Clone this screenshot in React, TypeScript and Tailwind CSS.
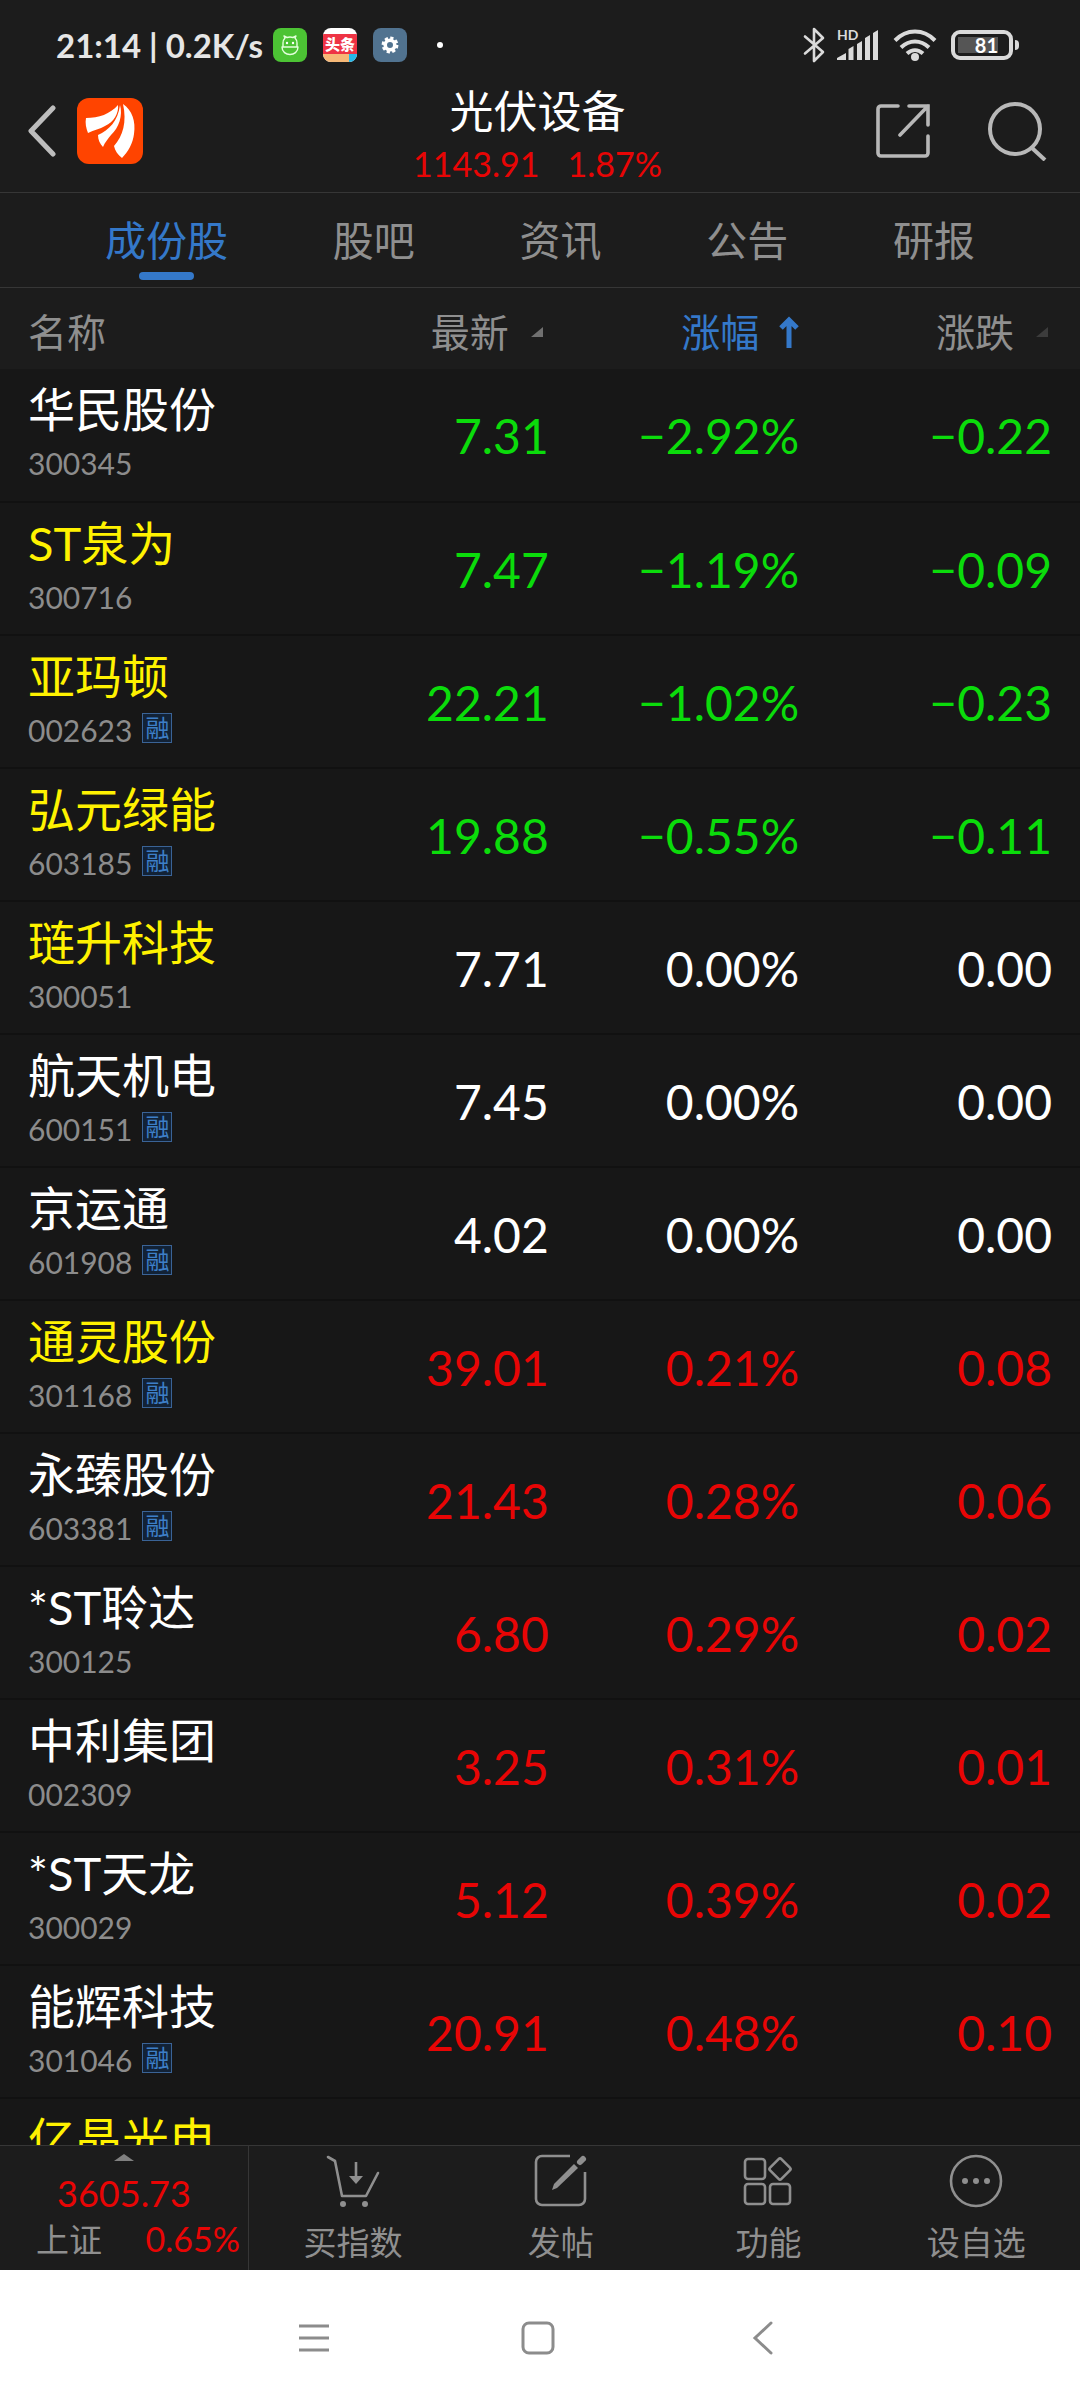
import React, { useState } from "react";
import clsx from "clsx";

type Stock = {
  name: string;
  code: string;
  price: string;
  percent: string;
  change: string;
  starred?: boolean;
  margin?: boolean;
};

const stocks: Stock[] = [
  { name: "华民股份", code: "300345", price: "7.31", percent: "−2.92%", change: "−0.22" },
  { name: "ST泉为", code: "300716", price: "7.47", percent: "−1.19%", change: "−0.09", starred: true },
  { name: "亚玛顿", code: "002623", price: "22.21", percent: "−1.02%", change: "−0.23", starred: true, margin: true },
  { name: "弘元绿能", code: "603185", price: "19.88", percent: "−0.55%", change: "−0.11", starred: true, margin: true },
  { name: "琏升科技", code: "300051", price: "7.71", percent: "0.00%", change: "0.00", starred: true },
  { name: "航天机电", code: "600151", price: "7.45", percent: "0.00%", change: "0.00", margin: true },
  { name: "京运通", code: "601908", price: "4.02", percent: "0.00%", change: "0.00", margin: true },
  { name: "通灵股份", code: "301168", price: "39.01", percent: "0.21%", change: "0.08", starred: true, margin: true },
  { name: "永臻股份", code: "603381", price: "21.43", percent: "0.28%", change: "0.06", margin: true },
  { name: "*ST聆达", code: "300125", price: "6.80", percent: "0.29%", change: "0.02" },
  { name: "中利集团", code: "002309", price: "3.25", percent: "0.31%", change: "0.01" },
  { name: "*ST天龙", code: "300029", price: "5.12", percent: "0.39%", change: "0.02" },
  { name: "能辉科技", code: "301046", price: "20.91", percent: "0.48%", change: "0.10", margin: true },
  { name: "亿晶光电", code: "", price: "", percent: "", change: "", starred: true },
];

const tabs = ["成份股", "股吧", "资讯", "公告", "研报"];

function trendColor(change: string) {
  if (change.startsWith("−")) return "text-[#0bdc0b]";
  if (change === "0.00") return "text-white";
  return "text-[#e80505]";
}

function StatusBar() {
  return (
    <div className="flex h-[90px] shrink-0 items-center justify-between pl-14 pr-[61px] text-[#e6e6e6]">
      <div className="flex items-center">
        <span className="text-[33px] font-bold leading-10">21:14 | 0.2K/s</span>
        <svg className="ml-[10px] h-[34px] w-[34px]" viewBox="0 0 34 34" fill="none">
          <rect width="34" height="34" rx="8" fill="#4cc334" />
          <g stroke="#e4ffdc" strokeWidth="1.4" strokeLinejoin="round">
            <path d="M10 19v-4c0-2 1-4 2-5l-1-2 3 1.500c2-.7 4-.7 6 0L23 8l-1 2c1.500 1.500 2 3 2 5v4" />
            <path d="M9 19h16c0 5-4 7.500-8 7.500S9 24 9 19Z" />
          </g>
          <circle cx="14" cy="15" r="1.200" fill="#fff" />
          <circle cx="20" cy="15" r="1.200" fill="#fff" />
        </svg>
        <span className="ml-4 flex h-[34px] w-[34px] flex-col overflow-hidden rounded-lg bg-white pt-[6px]">
          <span className="flex h-5 items-center justify-center bg-[#ee3344] text-[15px] font-black leading-5 text-white">
            头条
          </span>
          <span className="flex flex-1">
            <span className="flex-1 bg-[#f6b877]" />
            <span className="w-2 bg-[#27b8e8]" />
          </span>
        </span>
        <svg className="ml-4 h-[34px] w-[34px]" viewBox="0 0 34 34" fill="none">
          <rect width="34" height="34" rx="8" fill="#517390" />
          <circle cx="17" cy="17" r="4.800" stroke="#fff" strokeWidth="3.600" />
          <circle cx="17" cy="17" r="7" stroke="#fff" strokeWidth="2.800" strokeDasharray="3.200 2.300" />
        </svg>
        <span className="ml-[30px] h-[6px] w-[6px] rounded-full bg-white" />
      </div>
      <div className="flex items-center">
        <svg className="h-9 w-[22px]" viewBox="0 0 22 36" fill="none" stroke="#dadada" strokeWidth="2.600">
          <path d="M2 9.500 20 25l-9 9V2l9 9L2 26.500" strokeLinejoin="round" strokeLinecap="round" />
        </svg>
        <svg className="ml-3 h-9 w-[42px]" viewBox="0 -4 42 36" fill="#dadada">
          <text x="0" y="9" fontSize="14" fontWeight="700" fontFamily="Lato, sans-serif">
            HD
          </text>
          <path d="M0 29v-2l9-5v7zM11.500 29V18l5-3v14zM20 29V13l5-3v19zM28 29V7l5-3v25zM36 29V2l5-3v30z" />
        </svg>
        <svg className="ml-[14px] h-8 w-11" viewBox="0 0 44 32" fill="none" stroke="#dadada" strokeWidth="4">
          <path d="M2 11.500c11.500-12 28.500-12 40 0M8 18.500c8.500-8 19.500-8 28 0M14 24.500c5-4.500 11-4.500 16 0" />
          <circle cx="22" cy="28" r="4" fill="#dadada" stroke="none" />
        </svg>
        <div className="ml-[14px] flex items-center gap-[2px]">
          <div className="flex h-[30px] w-[62px] rounded-[9px] border-4 border-[#dadada] p-[3px]">
            <span className="flex w-10 items-center justify-end bg-[#555555] text-[20px] font-bold leading-4 text-white">
              81
            </span>
          </div>
          <span className="h-[10px] w-1 rounded-r bg-[#dadada]" />
        </div>
      </div>
    </div>
  );
}

function Header() {
  return (
    <header className="grid h-[103px] shrink-0 grid-cols-[1fr_auto_1fr] items-center border-b border-[#363636] pl-[27px] pr-8">
      <div className="flex items-center gap-5 pb-5">
        <button aria-label="返回">
          <svg className="h-[52px] w-[30px]" viewBox="0 0 30 52" fill="none" stroke="#bdbdbd" strokeWidth="5">
            <path d="M26 3 4 26l22 23" strokeLinecap="round" strokeLinejoin="round" />
          </svg>
        </button>
        <svg className="h-[66px] w-[66px]" viewBox="0 0 66 66">
          <rect width="66" height="66" rx="12" fill="#ff4400" />
          <g fill="#fff">
            <path d="M9 20c13 0 24-4 32-13 1 8-4 17-13 21-5 3-11 4-17 7-2-5-3-10-2-15Z" />
            <path d="M43 7c3 10-1 23-9 30-3 4-6 7-8 12-3-3-5-7-5-12 11-5 20-14 22-30Z" />
            <path d="M46 6c9 6 13 17 11 30-1 9-6 18-12 24-4-3-7-7-8-12 9-10 13-24 9-42Z" />
          </g>
        </svg>
      </div>
      <div className="flex flex-col items-center pb-2">
        <h1 className="text-[44px] font-normal leading-[42px] text-white">光伏设备</h1>
        <p className="flex gap-7 pt-3 text-[34px] leading-10 text-[#e80505]">
          <span>1143.91</span>
          <span>1.87%</span>
        </p>
      </div>
      <div className="flex items-center justify-end gap-[58px] pb-5">
        <button aria-label="分享">
          <svg className="h-[54px] w-[54px]" viewBox="0 0 54 54" fill="none" stroke="#b8b8b8" strokeWidth="3.600">
            <path
              d="M22 2H5a3 3 0 0 0-3 3v44a3 3 0 0 0 3 3h44a3 3 0 0 0 3-3V32M33 2h19v19M52 2 24 31"
              strokeLinecap="round"
            />
          </svg>
        </button>
        <button aria-label="搜索">
          <svg className="h-[60px] w-[60px]" viewBox="0 0 60 60" fill="none" stroke="#b8b8b8" strokeWidth="4">
            <circle cx="27" cy="28" r="25" />
            <path d="m44 47 13 12" />
          </svg>
        </button>
      </div>
    </header>
  );
}

function SortMark({ dim }: { dim?: boolean }) {
  return (
    <svg className={clsx("h-[10px] w-3", dim ? "text-[#3c3c3c]" : "text-[#707070]")} viewBox="0 0 12 10" fill="currentColor">
      <path d="M12 0v10H0z" />
    </svg>
  );
}

function StockRow({ stock }: { stock: Stock }) {
  const color = trendColor(stock.change);
  return (
    <tr className="h-[133px] border-b-2 border-[#111111]">
      <td className="pl-7 align-top">
        <div
          className={clsx(
            "whitespace-nowrap pt-[14px] text-[47px] leading-[52px]",
            stock.starred ? "text-[#fff200]" : "text-white"
          )}
        >
          {stock.name}
        </div>
        <div className="flex h-14 items-center gap-[10px] text-[30px] leading-9 text-[#8c8c8c]">
          {stock.code}
          {stock.margin && (
            <span className="mb-1 flex h-[30px] w-[30px] items-center justify-center border border-[#3a6396] bg-[#122236] text-[24px] leading-7 text-[#3d7fc8]">
              融
            </span>
          )}
        </div>
      </td>
      <td className={clsx("pr-[2px] pt-[2px] text-right text-[48px] leading-[52px]", color)}>{stock.price}</td>
      <td className={clsx("pt-[2px] text-right text-[48px] leading-[52px]", color)}>{stock.percent}</td>
      <td className={clsx("pr-7 pt-[2px] text-right text-[48px] leading-[52px]", color)}>{stock.change}</td>
    </tr>
  );
}

function BottomButton({ label, children }: { label: string; children: React.ReactNode }) {
  return (
    <button className="flex flex-1 flex-col items-center gap-[14px] pt-2 text-[33px] leading-10 text-[#8f8f8f]">
      <svg className="h-[54px] w-[54px]" viewBox="0 0 54 54" fill="none" stroke="currentColor" strokeWidth="2.600">
        {children}
      </svg>
      {label}
    </button>
  );
}

function BottomBar() {
  return (
    <footer className="flex h-[125px] shrink-0 border-t border-[#363636] bg-[#1c1c1c]">
      <button className="flex w-[249px] flex-col items-center border-r border-[#363636] pt-2">
        <svg className="h-[7px] w-5" viewBox="0 0 20 7" fill="#808080">
          <path d="M10 0 20 7H0z" />
        </svg>
        <span className="pt-3 text-[36px] leading-10 text-[#e80505]">3605.73</span>
        <span className="flex w-full items-center justify-between pl-9 pr-2 pt-[6px] leading-10">
          <span className="text-[33px] text-[#8f8f8f]">上证</span>
          <span className="text-[34px] text-[#e80505]">0.65%</span>
        </span>
      </button>
      <BottomButton label="买指数">
        <path d="m2 3 7 4 7 35h24l12-23" strokeLinecap="round" strokeLinejoin="round" />
        <path d="M30 8v16" />
        <path d="M23 22h14l-7 8z" fill="currentColor" stroke="none" />
        <circle cx="17" cy="50" r="3" fill="currentColor" stroke="none" />
        <circle cx="39" cy="50" r="3" fill="currentColor" stroke="none" />
      </BottomButton>
      <BottomButton label="发帖">
        <path d="M36 2H8a6 6 0 0 0-6 6v37a6 6 0 0 0 6 6h37a6 6 0 0 0 6-6V18" />
        <path d="m40 10 4 4-21 20-5 2 2-6z" fill="currentColor" stroke="none" />
        <path d="m46 8 3-3" strokeWidth="6" strokeLinecap="round" />
      </BottomButton>
      <BottomButton label="功能">
        <rect x="4" y="5" width="20" height="20" rx="3" />
        <rect x="4" y="30" width="20" height="20" rx="3" />
        <rect x="29" y="30" width="20" height="20" rx="3" />
        <rect x="31" y="7" width="16" height="16" rx="2" transform="rotate(45 39 15)" />
      </BottomButton>
      <BottomButton label="设自选">
        <circle cx="27" cy="27" r="25" />
        <g fill="currentColor" stroke="none">
          <circle cx="16" cy="27" r="3" />
          <circle cx="27" cy="27" r="3" />
          <circle cx="38" cy="27" r="3" />
        </g>
      </BottomButton>
    </footer>
  );
}

function SystemNav() {
  return (
    <nav className="flex h-[130px] shrink-0 items-center justify-center bg-white pr-1 pt-[6px]">
      <div className="flex items-center gap-[190px] text-[#8c8c8c]">
        <button aria-label="菜单">
          <svg className="h-9 w-8" viewBox="0 0 32 36" fill="none" stroke="currentColor" strokeWidth="3">
            <path d="M1 6h30M1 18h30M1 30h30" />
          </svg>
        </button>
        <button aria-label="主页">
          <svg className="h-9 w-9" viewBox="0 0 36 36" fill="none" stroke="currentColor" strokeWidth="3">
            <rect x="3" y="3" width="30" height="30" rx="6" />
          </svg>
        </button>
        <button aria-label="后退">
          <svg className="h-9 w-8" viewBox="0 0 32 36" fill="none" stroke="currentColor" strokeWidth="3">
            <path d="M25 3 9 18l16 15" strokeLinecap="round" />
          </svg>
        </button>
      </div>
    </nav>
  );
}

export default function App() {
  const [activeTab, setActiveTab] = useState("成份股");

  return (
    <div className="flex h-screen flex-col bg-[#1c1c1c] font-[Lato,'Noto_Sans_CJK_SC',sans-serif]">
      <StatusBar />
      <Header />
      <div role="tablist" className="flex h-[95px] shrink-0 justify-between border-b border-[#363636] px-[105px]">
        {tabs.map((tab) => (
          <button
            key={tab}
            role="tab"
            aria-selected={tab === activeTab}
            onClick={() => setActiveTab(tab)}
            className={clsx(
              "flex flex-col items-center pt-6 text-[41px] leading-[48px]",
              tab === activeTab ? "text-[#3478c9]" : "text-[#8f8f8f]"
            )}
          >
            {tab}
            {tab === activeTab && <span className="mt-[7px] h-2 w-[55px] rounded-full bg-[#3478c9]" />}
          </button>
        ))}
      </div>
      <main className="min-h-0 flex-1 overflow-hidden bg-[#171717]">
        <table className="w-full table-fixed border-collapse">
          <thead>
            <tr className="h-[81px] bg-[#1c1c1c] text-[39px] leading-[48px] text-[#8f8f8f]">
              <th className="w-[26%] pl-7 pt-[6px] text-left font-normal">名称</th>
              <th className="w-[25%] pr-2 pt-[6px] font-normal">
                <button className="ml-auto flex items-center gap-[22px]">
                  最新 <SortMark />
                </button>
              </th>
              <th className="w-[23%] pt-[6px] font-normal text-[#3478c9]" aria-sort="ascending">
                <button className="ml-auto flex items-center gap-5">
                  涨幅
                  <svg className="h-8 w-5" viewBox="0 0 20 32" fill="none" stroke="currentColor" strokeWidth="5">
                    <path d="M10 32V4M2 12l8-8 8 8" />
                  </svg>
                </button>
              </th>
              <th className="pr-8 pt-[6px] font-normal">
                <button className="ml-auto flex items-center gap-[22px]">
                  涨跌 <SortMark dim />
                </button>
              </th>
            </tr>
          </thead>
          <tbody>
            {stocks.map((stock) => (
              <StockRow key={stock.name} stock={stock} />
            ))}
          </tbody>
        </table>
      </main>
      <BottomBar />
      <SystemNav />
    </div>
  );
}
